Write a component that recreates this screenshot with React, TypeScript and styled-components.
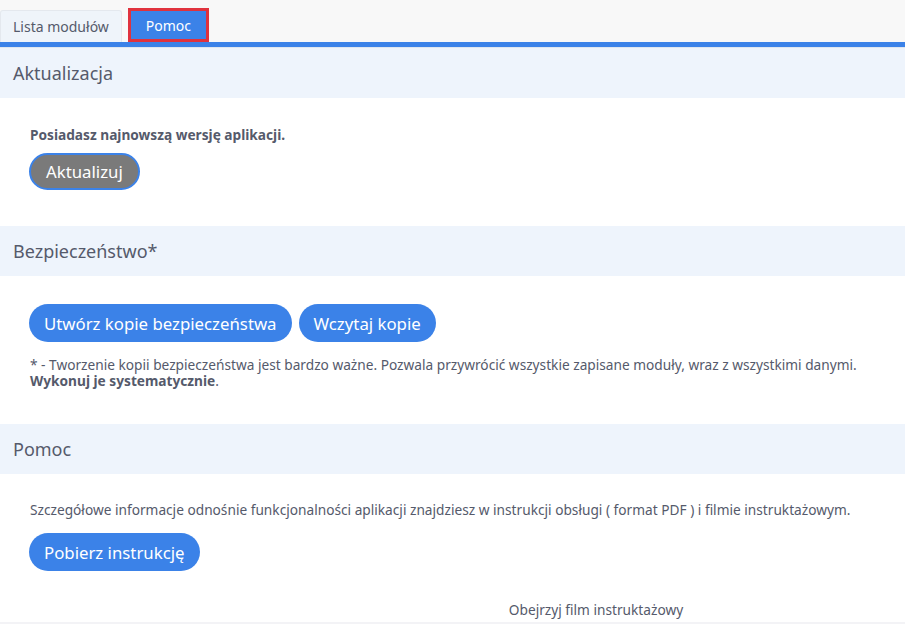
import React from 'react';
import styled, { createGlobalStyle } from 'styled-components';

const GlobalStyle = createGlobalStyle`
  html, body {
    margin: 0;
    padding: 0;
    background: #ffffff;
  }
  body {
    font-family: "Noto Sans", "Open Sans", sans-serif;
    color: #555a6b;
  }
  * {
    box-sizing: border-box;
  }
`;

const TabBar = styled.div`
  display: flex;
  align-items: flex-end;
  gap: 6px;
  height: 42px;
  background: #f8f8f8;
`;

const Tab = styled.button<{ $active?: boolean }>`
  display: flex;
  align-items: center;
  justify-content: center;
  height: ${p => (p.$active ? '34px' : '32px')};
  padding: 0 ${p => (p.$active ? '15px' : '12px')};
  font-family: inherit;
  font-size: 14px;
  color: ${p => (p.$active ? '#ffffff' : '#555a6b')};
  background: ${p => (p.$active ? '#3b82e8' : '#eff4fa')};
  border: ${p => (p.$active ? '3px solid #e0323d' : '1px solid #e4e8ee')};
  border-bottom: ${p => (p.$active ? '3px solid #e0323d' : 'none')};
  border-radius: ${p => (p.$active ? '0' : '3px 3px 0 0')};
  cursor: pointer;
`;

const BlueLine = styled.div`
  height: 6px;
  background: #3b82e8;
  border-bottom: 1px solid #dfe6ef;
`;

const SectionHeader = styled.div`
  display: flex;
  align-items: center;
  height: 50px;
  padding-left: 13px;
  background: #eef4fc;
  font-size: 18px;
  color: #555a6b;
`;

const SectionBody = styled.div<{ $pt: number; $pb: number }>`
  display: flex;
  flex-direction: column;
  align-items: flex-start;
  padding: ${p => p.$pt}px 8px ${p => p.$pb}px 29px;
`;

const Text = styled.p<{ $bold?: boolean }>`
  margin: 0;
  font-size: 13.7px;
  line-height: 16px;
  font-weight: ${p => (p.$bold ? 700 : 400)};
  color: #555a6b;
  padding-left: 1px;
  white-space: nowrap;
`;

const Strong = styled.span`
  font-weight: 700;
`;

const Button = styled.button<{ $grey?: boolean }>`
  height: ${p => (p.$grey ? '37px' : '38px')};
  padding: 0 15px;
  font-family: inherit;
  font-size: 16.8px;
  color: #ffffff;
  background: ${p => (p.$grey ? '#7a7a7a' : '#3b82e8')};
  border: ${p => (p.$grey ? '2px solid #3b82e8' : 'none')};
  border-radius: 19px;
  cursor: pointer;
`;

const ButtonRow = styled.div`
  display: flex;
  gap: 7px;
`;

const Spacer = styled.div<{ $h: number }>`
  height: ${p => p.$h}px;
`;

const VideoTitle = styled.div`
  align-self: stretch;
  text-align: center;
  padding-left: 266px;
  font-size: 13.7px;
  color: #555a6b;
  line-height: 16px;
`;

const BottomLine = styled.div`
  height: 4px;
  background: #f3f3f6;
`;

export default function App() {
  return (
    <>
      <GlobalStyle />
      <TabBar>
        <Tab>Lista modułów</Tab>
        <Tab $active>Pomoc</Tab>
      </TabBar>
      <BlueLine />

      <SectionHeader>Aktualizacja</SectionHeader>
      <SectionBody $pt={29} $pb={36}>
        <Text $bold>Posiadasz najnowszą wersję aplikacji.</Text>
        <Spacer $h={10} />
        <Button $grey>Aktualizuj</Button>
      </SectionBody>

      <SectionHeader>Bezpieczeństwo*</SectionHeader>
      <SectionBody $pt={28} $pb={35}>
        <ButtonRow>
          <Button>Utwórz kopie bezpieczeństwa</Button>
          <Button>Wczytaj kopie</Button>
        </ButtonRow>
        <Spacer $h={15} />
        <Text>
          * - Tworzenie kopii bezpieczeństwa jest bardzo ważne. Pozwala przywrócić wszystkie zapisane moduły, wraz z wszystkimi danymi.
        </Text>
        <Text>
          <Strong>Wykonuj je systematycznie</Strong>.
        </Text>
      </SectionBody>

      <SectionHeader>Pomoc</SectionHeader>
      <SectionBody $pt={28} $pb={0}>
        <Text>
          Szczegółowe informacje odnośnie funkcjonalności aplikacji znajdziesz w instrukcji obsługi ( format PDF ) i filmie instruktażowym.
        </Text>
        <Spacer $h={15} />
        <Button>Pobierz instrukcję</Button>
        <Spacer $h={31} />
        <VideoTitle>Obejrzyj film instruktażowy</VideoTitle>
      </SectionBody>
      <Spacer $h={4} />
      <BottomLine />
    </>
  );
}
